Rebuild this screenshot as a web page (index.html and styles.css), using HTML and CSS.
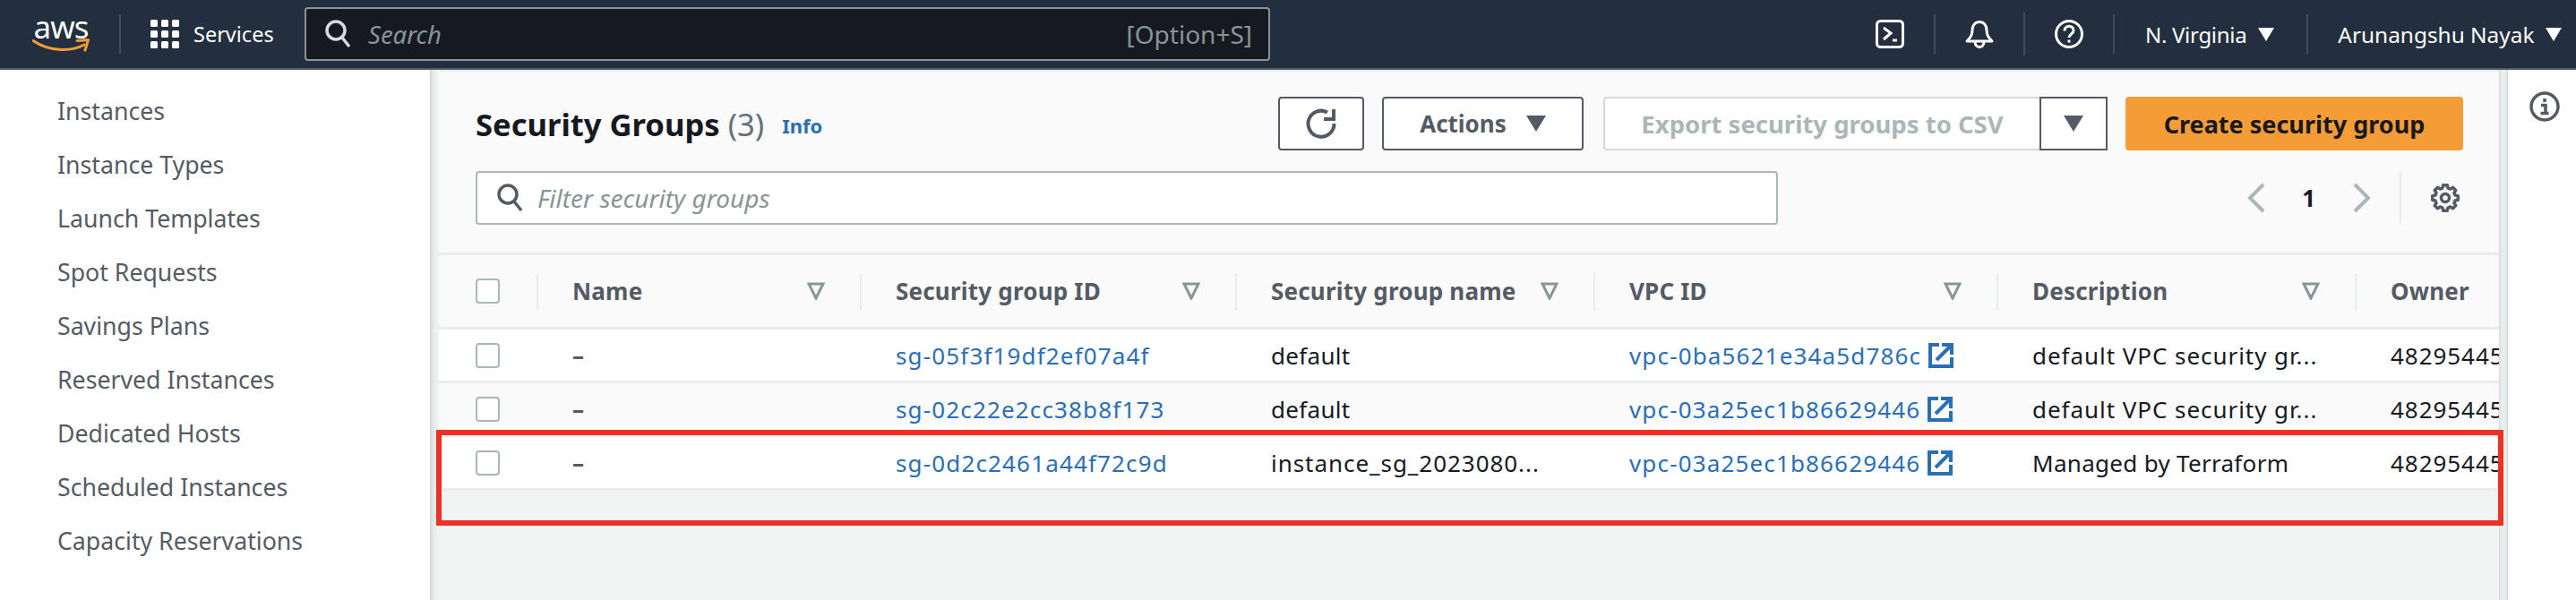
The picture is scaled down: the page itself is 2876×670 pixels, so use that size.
FILE: index.html
```html
<!DOCTYPE html>
<html>
  <head>
    <meta charset="UTF-8" />
    <title>Security Groups</title>
    <link rel="stylesheet" href="styles.css">
  </head>
  <body>
    <header class="topbar">
      <div class="logo">
        <span class="logo-text">aws</span>
        <svg class="logo-smile" width="64" height="16" viewBox="0 0 64 16">
          <path d="M1 2.500C18 14 42 15.500 58 7" fill="none" stroke="#f49d37" stroke-width="3" stroke-linecap="round"/>
          <path d="M50 2.500L62.500 1.500L59 13" fill="none" stroke="#f49d37" stroke-width="3" stroke-linejoin="round" stroke-linecap="round"/>
        </svg>
      </div>
      <span class="bar-rule"></span>
      <svg class="bar-icon" width="32" height="32" viewBox="0 0 32 32" fill="#fff">
        <rect x="0" y="0" width="8" height="8" rx="1.500"/><rect x="12" y="0" width="8" height="8" rx="1.500"/><rect x="24" y="0" width="8" height="8" rx="1.500"/>
        <rect x="0" y="12" width="8" height="8" rx="1.500"/><rect x="12" y="12" width="8" height="8" rx="1.500"/><rect x="24" y="12" width="8" height="8" rx="1.500"/>
        <rect x="0" y="24" width="8" height="8" rx="1.500"/><rect x="12" y="24" width="8" height="8" rx="1.500"/><rect x="24" y="24" width="8" height="8" rx="1.500"/>
      </svg>
      <span class="services">Services</span>
      <div class="search">
        <svg width="30" height="32" viewBox="0 0 30 32" fill="none" stroke="#d5dbdb" stroke-width="3.500">
          <circle cx="12" cy="12" r="10"/><path d="M19 20l8 10"/>
        </svg>
        <span class="search-text">Search</span>
        <span class="search-key">[Option+S]</span>
      </div>
      <svg class="bar-icon icon-term" width="32" height="32" viewBox="0 0 32 32" fill="none" stroke="#fff" stroke-width="3">
        <rect x="1.500" y="1.500" width="29" height="29" rx="4"/>
        <path d="M9 9l8 6-8 7M19 23h5"/>
      </svg>
      <span class="bar-rule"></span>
      <svg class="bar-icon" width="32" height="32" viewBox="0 0 32 32" fill="none" stroke="#fff" stroke-width="3" stroke-linejoin="round">
        <path d="M16 2.500c-5 0-8 4-8 9 0 6-2 8-6 12.500h28c-4-4.500-6-6.500-6-12.500 0-5-3-9-8-9z"/>
        <path d="M11 24.500c0 8 10 8 10 0"/>
      </svg>
      <span class="bar-rule rule-tall"></span>
      <svg class="bar-icon" width="32" height="32" viewBox="0 0 32 32" fill="none" stroke="#fff" stroke-width="3">
        <circle cx="16" cy="16" r="14.500"/>
        <path d="M11 12.500c0-7 10-7 10-.5 0 4-5 4-5 8"/>
        <path d="M16 22.500v3"/>
      </svg>
      <span class="bar-rule"></span>
      <span class="bar-text region">N. Virginia</span>
      <span class="white-caret"></span>
      <span class="bar-rule rule-user"></span>
      <span class="bar-text user">Arunangshu Nayak</span>
      <span class="white-caret"></span>
    </header>

    <div class="page">
      <nav class="sidenav">
        <a>Instances</a>
        <a>Instance Types</a>
        <a>Launch Templates</a>
        <a>Spot Requests</a>
        <a>Savings Plans</a>
        <a>Reserved Instances</a>
        <a>Dedicated Hosts</a>
        <a>Scheduled Instances</a>
        <a>Capacity Reservations</a>
      </nav>

      <main class="content">
        <section class="panel-head">
          <div class="title-row">
            <h1>Security Groups <span class="count">(3)</span></h1>
            <a class="info">Info</a>
            <button class="btn btn-refresh">
              <svg width="36" height="36" viewBox="0 0 36 36" fill="none" stroke="#545b64" stroke-width="4">
                <path d="M25 5.500A14.500 14.500 0 1 0 32.500 18"/>
                <path d="M21 13H32V2"/>
              </svg>
            </button>
            <button class="btn btn-actions">Actions <span class="dark-caret"></span></button>
            <button class="btn btn-export">Export security groups to CSV</button>
            <button class="btn btn-export-menu"><span class="dark-caret"></span></button>
            <button class="btn btn-create">Create security group</button>
          </div>
          <div class="filter-row">
            <div class="filter">
              <svg width="30" height="32" viewBox="0 0 30 32" fill="none" stroke="#545b64" stroke-width="3.500">
                <circle cx="12" cy="12" r="10"/><path d="M19 20l8 10"/>
              </svg>
              <span>Filter security groups</span>
            </div>
            <div class="pager">
              <svg width="22" height="34" viewBox="0 0 22 34" fill="none" stroke="#aab7b8" stroke-width="4"><path d="M19 2L4 17l15 15"/></svg>
              <span class="page-num">1</span>
              <svg width="22" height="34" viewBox="0 0 22 34" fill="none" stroke="#aab7b8" stroke-width="4"><path d="M3 2l15 15L3 32"/></svg>
              <span class="pager-rule"></span>
              <svg width="32" height="32" viewBox="0 0 32 32" fill="none" stroke="#545b64" stroke-width="3.500" stroke-linejoin="round">
                <g transform="translate(16 16)">
                  <polygon points="11.11,-2.98 14.32,-2.27 14.32,2.27 11.11,2.98 9.96,5.75 11.73,8.52 8.52,11.73 5.75,9.96 2.98,11.11 2.27,14.32 -2.27,14.32 -2.98,11.11 -5.75,9.96 -8.52,11.73 -11.73,8.52 -9.96,5.75 -11.11,2.98 -14.32,2.27 -14.32,-2.27 -11.11,-2.98 -9.96,-5.75 -11.73,-8.52 -8.52,-11.73 -5.75,-9.96 -2.98,-11.11 -2.27,-14.32 2.27,-14.32 2.98,-11.11 5.75,-9.96 8.52,-11.73 11.73,-8.52 9.96,-5.75"/>
                  <circle r="4.500"/>
                </g>
              </svg>
            </div>
          </div>
        </section>

        <div class="row row-head">
          <div class="cell cell-check"><span class="check"></span></div>
          <div class="cell"><b>Name</b><svg class="sort" width="20" height="20" viewBox="0 0 20 20"><path d="M2 2h16l-8 16z" fill="none" stroke="#879596" stroke-width="3"/></svg></div>
          <div class="cell"><b>Security group ID</b><svg class="sort" width="20" height="20" viewBox="0 0 20 20"><path d="M2 2h16l-8 16z" fill="none" stroke="#879596" stroke-width="3"/></svg></div>
          <div class="cell"><b>Security group name</b><svg class="sort" width="20" height="20" viewBox="0 0 20 20"><path d="M2 2h16l-8 16z" fill="none" stroke="#879596" stroke-width="3"/></svg></div>
          <div class="cell"><b>VPC ID</b><svg class="sort" width="20" height="20" viewBox="0 0 20 20"><path d="M2 2h16l-8 16z" fill="none" stroke="#879596" stroke-width="3"/></svg></div>
          <div class="cell"><b>Description</b><svg class="sort" width="20" height="20" viewBox="0 0 20 20"><path d="M2 2h16l-8 16z" fill="none" stroke="#879596" stroke-width="3"/></svg></div>
          <div class="cell"><b>Owner</b></div>
        </div>

        <div class="row">
          <div class="cell cell-check"><span class="check"></span></div>
          <div class="cell cell-dash">–</div>
          <div class="cell"><a class="link">sg-05f3f19df2ef07a4f</a></div>
          <div class="cell">default</div>
          <div class="cell"><a class="link">vpc-0ba5621e34a5d786c</a><svg class="ext" width="28" height="28" viewBox="0 0 28 28" fill="none" stroke="#2a6eb5" stroke-width="4"><path d="M12 2H2v24h24V16M15 2h11v11M24 4L9 19"/></svg></div>
          <div class="cell cell-wide">default VPC security gr...</div>
          <div class="cell cell-wide">482954455516</div>
        </div>
        <div class="row row-alt">
          <div class="cell cell-check"><span class="check"></span></div>
          <div class="cell cell-dash">–</div>
          <div class="cell"><a class="link">sg-02c22e2cc38b8f173</a></div>
          <div class="cell">default</div>
          <div class="cell"><a class="link">vpc-03a25ec1b86629446</a><svg class="ext" width="28" height="28" viewBox="0 0 28 28" fill="none" stroke="#2a6eb5" stroke-width="4"><path d="M12 2H2v24h24V16M15 2h11v11M24 4L9 19"/></svg></div>
          <div class="cell cell-wide">default VPC security gr...</div>
          <div class="cell cell-wide">482954455516</div>
        </div>
        <div class="row">
          <div class="cell cell-check"><span class="check"></span></div>
          <div class="cell cell-dash">–</div>
          <div class="cell"><a class="link">sg-0d2c2461a44f72c9d</a></div>
          <div class="cell cell-wide">instance_sg_2023080...</div>
          <div class="cell"><a class="link">vpc-03a25ec1b86629446</a><svg class="ext" width="28" height="28" viewBox="0 0 28 28" fill="none" stroke="#2a6eb5" stroke-width="4"><path d="M12 2H2v24h24V16M15 2h11v11M24 4L9 19"/></svg></div>
          <div class="cell">Managed by Terraform</div>
          <div class="cell cell-wide">482954455516</div>
        </div>

        <div class="highlight"></div>
      </main>

      <aside class="tools">
        <svg width="34" height="34" viewBox="0 0 34 34" fill="none" stroke="#545b64" stroke-width="3.500">
          <circle cx="17" cy="17" r="15"/>
          <path d="M17 8v4M13 15.500h5v9M12.500 24.500h9"/>
        </svg>
      </aside>
    </div>
  </body>
</html>
```

FILE: styles.css
```css
* {
  box-sizing: border-box;
}
html, body {
  margin: 0;
  height: 670px;
  overflow: hidden;
}
body {
  font-family: "Noto Sans", "Open Sans", sans-serif;
  font-size: 28px;
  color: #16191f;
  background: #fff;
}

/* top bar */
.topbar {
  display: flex;
  align-items: center;
  height: 78px;
  background: #232f3e;
  border-bottom: 2px solid #545b64;
  color: #fff;
}
.logo {
  width: 64px;
  margin-left: 36px;
  display: flex;
  flex-direction: column;
  align-items: center;
}
.logo-text {
  font-size: 35px;
  line-height: 26px;
  height: 26px;
  letter-spacing: -1px;
}
.logo-smile {
  display: block;
}
.bar-rule {
  width: 2px;
  height: 44px;
  margin-left: 33px;
  background: #414d5c;
  flex: none;
}
.rule-tall {
  height: 48px;
}
.services {
  margin-left: 16px;
  font-size: 23.500px;
  width: 90px;
  white-space: nowrap;
  flex: none;
}
.search {
  display: flex;
  align-items: center;
  width: 1078px;
  height: 60px;
  margin-left: 34px;
  padding: 0 18px 0 21px;
  background: #16191f;
  border: 2px solid #879596;
  border-radius: 4px;
  flex: none;
}
.search-text {
  margin-left: 18px;
  color: #879596;
  font-style: italic;
  font-size: 27.500px;
}
.search-key {
  margin-left: auto;
  color: #879596;
  font-size: 28px;
}
.bar-icon {
  margin-left: 33px;
  flex: none;
}
.icon-term {
  margin-left: 676px;
}
.bar-text {
  font-size: 24px;
  white-space: nowrap;
}
.region {
  margin-left: 34px;
  letter-spacing: -.3px;
}
.user {
  margin-left: 33px;
  font-size: 24.400px;
}
.rule-user {
  margin-left: 36px;
}
.white-caret {
  width: 0;
  height: 0;
  margin-left: 13px;
  border-left: 9px solid transparent;
  border-right: 9px solid transparent;
  border-top: 15px solid #fff;
  flex: none;
}

/* page */
.page {
  display: flex;
  height: 592px;
}
.sidenav {
  width: 490px;
  flex: none;
  padding-top: 15px;
  background: linear-gradient(to right, #fff 480px, #d0d5d5 480px, #eaeded 485px, #f2f3f3 490px);
}
.sidenav a {
  display: flex;
  align-items: center;
  height: 60px;
  padding-left: 64px;
  color: #545b64;
  font-size: 26.700px;
}
.content {
  position: relative;
  width: 2300px;
  flex: none;
  background: #f2f3f3;
  border-top: 2px solid #eaeded;
}
.tools {
  flex: 1;
  padding: 24px 0 0 34px;
  background: linear-gradient(to right, #d5dbdb, #eaeded 3px, #eaeded 8px, #c8cdcd 10px, #fff 10px);
}

/* heading area */
.panel-head {
  height: 202px;
  padding: 28px 40px 0 41px;
  background: #fafafa;
}
.title-row {
  display: flex;
  align-items: center;
  height: 60px;
}
h1 {
  margin: 0;
  font-size: 34.600px;
  font-weight: 700;
  white-space: nowrap;
}
.count {
  color: #687078;
  font-weight: 400;
}
.info {
  margin-left: 20px;
  margin-top: 4px;
  color: #2a6eb5;
  font-size: 22px;
  font-weight: 700;
}
.btn {
  display: flex;
  align-items: center;
  justify-content: center;
  height: 60px;
  padding: 0;
  background: #fff;
  border: 2px solid #545b64;
  border-radius: 4px;
  font-family: inherit;
  font-size: 26px;
  font-weight: 700;
  color: #545b64;
  flex: none;
}
.btn-refresh {
  width: 96px;
  margin-left: auto;
}
.btn-actions {
  width: 225px;
  margin-left: 20px;
  gap: 22px;
}
.btn-export {
  width: 487px;
  margin-left: 22px;
  font-size: 27.500px;
  color: #aab7b8;
  border-color: #d5dbdb;
  border-right: 0;
  border-radius: 4px 0 0 4px;
}
.btn-export-menu {
  width: 76px;
  border-radius: 0;
}
.btn-create {
  width: 377px;
  margin-left: 20px;
  font-size: 27px;
  background: #f49d37;
  border-color: #f49d37;
  color: #16191f;
}
.dark-caret {
  width: 0;
  height: 0;
  border-left: 11px solid transparent;
  border-right: 11px solid transparent;
  border-top: 18px solid #545b64;
}
.filter-row {
  display: flex;
  align-items: center;
  height: 60px;
  margin-top: 23px;
}
.filter {
  display: flex;
  align-items: center;
  gap: 15px;
  width: 1454px;
  height: 60px;
  padding-left: 22px;
  background: #fff;
  border: 2px solid #aab7b8;
  border-radius: 4px;
}
.filter span {
  color: #879596;
  font-style: italic;
  font-size: 28px;
}
.pager {
  display: flex;
  align-items: center;
  margin-left: auto;
  margin-right: 4px;
  height: 60px;
}
.page-num {
  margin: 0 41px 0 40px;
  font-weight: 700;
  font-size: 26px;
}
.pager-rule {
  width: 2px;
  height: 60px;
  margin: 0 33px 0 31px;
  background: #eaeded;
}

/* table */
.row {
  display: grid;
  grid-template-columns: 109px 361px 419px 400px 450px 400px 1fr;
  height: 60px;
  background: #fff;
  border-bottom: 3px solid #eaeded;
}
.row-alt {
  background: #fafafa;
}
.row-head {
  height: 86px;
  background: #fafafa;
  border-top: 3px solid #eaeded;
  color: #545b64;
}
.cell {
  display: flex;
  align-items: center;
  padding-left: 40px;
  white-space: nowrap;
  overflow: hidden;
  font-size: 26px;
  letter-spacing: .3px;
}
.cell-wide {
  letter-spacing: .95px;
}
.cell-dash {
  font-weight: 700;
  color: #545b64;
}
.row-head .cell {
  position: relative;
  letter-spacing: .2px;
}
.row-head .cell + .cell::before {
  content: "";
  position: absolute;
  left: 0;
  top: 20px;
  width: 2px;
  height: 42px;
  background: #eaeded;
}
.cell-check {
  padding-left: 41px;
}
.check {
  width: 27px;
  height: 28px;
  background: #fff;
  border: 2px solid #aab7b8;
  border-radius: 4px;
}
.sort {
  margin-left: auto;
  margin-right: 39px;
  flex: none;
}
.link {
  color: #2a6eb5;
  letter-spacing: 1.150px;
}
.ext {
  margin-left: 8px;
  flex: none;
}

/* red box drawn over the last row */
.highlight {
  position: absolute;
  left: -3px;
  top: 400px;
  width: 2308px;
  height: 107px;
  border: 6px solid #ee3124;
}
```
